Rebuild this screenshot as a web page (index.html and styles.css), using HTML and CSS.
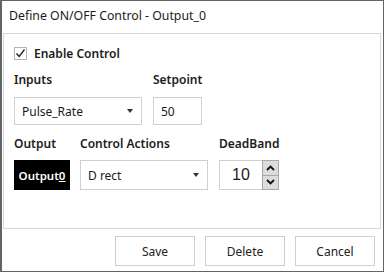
FILE: index.html
```html
<!DOCTYPE html>
<html lang="en">
<head>
  <meta charset="UTF-8">
  <title>Define ON/OFF Control</title>
  <link rel="stylesheet" href="styles.css">
</head>
<body>
  <div class="window">
    <div class="title-bar">Define ON/OFF Control - Output_0</div>

    <!-- Panel con los controles -->
    <div class="panel">
      <label class="check-row">
        <span class="check-box">
          <svg width="11" height="11" viewBox="0 0 11 11"><polyline points="1.5,5.5 4.2,8.5 9.5,1.5" fill="none" stroke="#222" stroke-width="1.4"/></svg>
        </span>
        <span class="check-label">Enable Control</span>
      </label>

      <div class="row row-inputs">
        <div class="field">
          <div class="field-label">Inputs</div>
          <div class="combo combo-wide">
            <span>Pulse_Rate</span>
            <span class="combo-arrow"></span>
          </div>
        </div>
        <div class="field">
          <div class="field-label">Setpoint</div>
          <div class="text-box setpoint">50</div>
        </div>
      </div>

      <div class="row row-output">
        <div class="field">
          <div class="field-label">Output</div>
          <div class="output-tag">Output<u>0</u></div>
        </div>
        <div class="field">
          <div class="field-label">Control Actions</div>
          <div class="combo combo-wide">
            <span>D rect</span>
            <span class="combo-arrow"></span>
          </div>
        </div>
        <div class="field">
          <div class="field-label">DeadBand</div>
          <div class="spinner">
            <div class="spinner-value">10</div>
            <div class="spinner-buttons">
              <div class="spin-btn">
                <svg width="9" height="6" viewBox="0 0 9 6"><polyline points="1,5 4.5,1.5 8,5" fill="none" stroke="#111" stroke-width="1.8"/></svg>
              </div>
              <div class="spin-btn">
                <svg width="9" height="6" viewBox="0 0 9 6"><polyline points="1,1 4.5,4.5 8,1" fill="none" stroke="#111" stroke-width="1.8"/></svg>
              </div>
            </div>
          </div>
        </div>
      </div>
    </div>

    <!-- Botones -->
    <div class="footer">
      <button class="dlg-button">Save</button>
      <button class="dlg-button">Delete</button>
      <button class="dlg-button">Cancel</button>
    </div>
  </div>
</body>
</html>
```

FILE: styles.css
```css
/* Estilos del dialogo */
* {
  box-sizing: border-box;
}
body {
  margin: 0;
  font-family: "Noto Sans", "Open Sans", sans-serif;
  font-size: 12px;
  color: #1b1b1b;
  background: #ffffff;
}
.window {
  width: 384px;
  height: 272px;
  border: 1px solid #646464;
  border-left-width: 2px;
  background: #ffffff;
  display: flex;
  flex-direction: column;
}
.title-bar {
  height: 32px;
  line-height: 30px;
  padding-left: 7px;
  font-size: 12.3px;
}
.panel {
  margin: 0 2px 0 1px;
  height: 196px;
  border: 1px solid #d9d9d9;
  padding: 12px 0 0 10px;
}
.check-row {
  display: flex;
  align-items: center;
  gap: 7px;
  height: 14px;
}
.check-box {
  width: 13px;
  height: 13px;
  border: 1px solid #b4b4b4;
  display: flex;
  align-items: center;
  justify-content: center;
}
.check-label,
.field-label {
  font-weight: 600;
}
.row {
  display: flex;
}
.row-inputs {
  margin-top: 12px;
  gap: 11px;
}
.row-output {
  margin-top: 11px;
  gap: 10px;
}
.row-output .field:last-child {
  margin-left: 1px;
}
.field-label {
  height: 16px;
  line-height: 16px;
  margin-bottom: 9px;
}
.row-output .field-label {
  margin-bottom: 8px;
}
.combo {
  height: 28px;
  border: 1px solid #d0d0d0;
  display: flex;
  align-items: center;
  justify-content: space-between;
  padding: 0 8px 0 7px;
}
.row-output .combo {
  height: 30px;
}
.combo-wide {
  width: 128px;
}
.combo-arrow {
  width: 0;
  height: 0;
  border-left: 3.5px solid transparent;
  border-right: 3.5px solid transparent;
  border-top: 4px solid #333;
}
.text-box {
  height: 28px;
  border: 1px solid #d0d0d0;
  display: flex;
  align-items: center;
  padding-left: 7px;
}
.setpoint {
  width: 49px;
}
.output-tag {
  width: 56px;
  height: 30px;
  background: #000000;
  color: #ffffff;
  font-weight: 600;
  font-size: 11.5px;
  display: flex;
  align-items: center;
  justify-content: center;
}
.spinner {
  display: flex;
  height: 30px;
}
.spinner-value {
  width: 43px;
  border: 1px solid #d0d0d0;
  border-right: none;
  display: flex;
  align-items: center;
  justify-content: center;
  font-size: 16px;
  font-family: "Liberation Sans", sans-serif;
}
.spinner-buttons {
  width: 17px;
  display: flex;
  flex-direction: column;
  border: 1px solid #a8a8a8;
}
.spin-btn {
  flex: 1;
  background: #dcdcdc;
  display: flex;
  align-items: center;
  justify-content: center;
}
.spin-btn + .spin-btn {
  border-top: 1px solid #a8a8a8;
}
.footer {
  flex: 1;
  display: flex;
  justify-content: flex-end;
  gap: 10px;
  padding: 7px 8px 0 0;
}
.dlg-button {
  width: 80px;
  height: 30px;
  background: #ffffff;
  border: 1px solid #cfcfcf;
  font-family: inherit;
  font-size: 12px;
  color: #222;
}
```
